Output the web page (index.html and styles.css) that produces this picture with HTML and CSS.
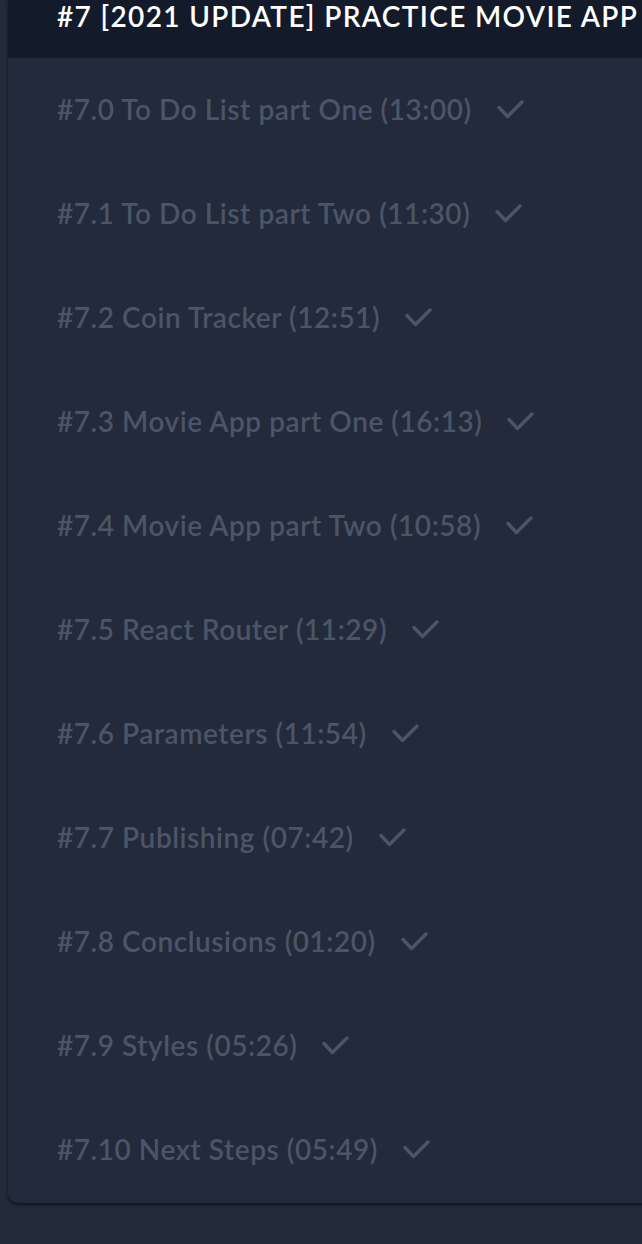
FILE: index.html
```html
<!DOCTYPE html>
<html>
<head>
<meta charset="utf-8">
<link rel="stylesheet" href="styles.css">
</head>
<body>
<section class="card">
  <h2 class="card-title">#7 [2021 UPDATE] PRACTICE MOVIE APP</h2>
  <ul class="lessons">
    <li class="lesson"><span>#7.0 To Do List part One (13:00)</span><svg class="check" viewBox="0 0 28 22"><path d="M3 8.5 L11.5 17.5 L26 3"/></svg></li>
    <li class="lesson"><span>#7.1 To Do List part Two (11:30)</span><svg class="check" viewBox="0 0 28 22"><path d="M3 8.5 L11.5 17.5 L26 3"/></svg></li>
    <li class="lesson"><span>#7.2 Coin Tracker (12:51)</span><svg class="check" viewBox="0 0 28 22"><path d="M3 8.5 L11.5 17.5 L26 3"/></svg></li>
    <li class="lesson"><span>#7.3 Movie App part One (16:13)</span><svg class="check" viewBox="0 0 28 22"><path d="M3 8.5 L11.5 17.5 L26 3"/></svg></li>
    <li class="lesson"><span>#7.4 Movie App part Two (10:58)</span><svg class="check" viewBox="0 0 28 22"><path d="M3 8.5 L11.5 17.5 L26 3"/></svg></li>
    <li class="lesson"><span>#7.5 React Router (11:29)</span><svg class="check" viewBox="0 0 28 22"><path d="M3 8.5 L11.5 17.5 L26 3"/></svg></li>
    <li class="lesson"><span>#7.6 Parameters (11:54)</span><svg class="check" viewBox="0 0 28 22"><path d="M3 8.5 L11.5 17.5 L26 3"/></svg></li>
    <li class="lesson"><span>#7.7 Publishing (07:42)</span><svg class="check" viewBox="0 0 28 22"><path d="M3 8.5 L11.5 17.5 L26 3"/></svg></li>
    <li class="lesson"><span>#7.8 Conclusions (01:20)</span><svg class="check" viewBox="0 0 28 22"><path d="M3 8.5 L11.5 17.5 L26 3"/></svg></li>
    <li class="lesson"><span>#7.9 Styles (05:26)</span><svg class="check" viewBox="0 0 28 22"><path d="M3 8.5 L11.5 17.5 L26 3"/></svg></li>
    <li class="lesson"><span>#7.10 Next Steps (05:49)</span><svg class="check" viewBox="0 0 28 22"><path d="M3 8.5 L11.5 17.5 L26 3"/></svg></li>
  </ul>
</section>
</body>
</html>
```

FILE: styles.css
```css
html, body {
  margin: 0;
  padding: 0;
  background: #232a3a;
  overflow: hidden;
}
body {
  font-family: Lato, "Open Sans", sans-serif;
  width: 642px;
  height: 1244px;
}
.card {
  margin-left: 8px;
  width: 660px;
  height: 1203px;
  background: #222a3b;
  border-radius: 0 0 0 10px;
  box-shadow: 0 2px 3px rgba(10, 14, 24, 0.8);
  overflow: hidden;
}
.card-title {
  margin: 0;
  height: 58px;
  box-sizing: border-box;
  padding: 0 0 0 49px;
  background: #131a2a;
  color: #ffffff;
  font-size: 28px;
  font-weight: 600;
  line-height: 32px;
  letter-spacing: 1.35px;
  white-space: nowrap;
}
.lessons {
  list-style: none;
  margin: 0;
  padding: 0 0 0 49px;
}
.lesson {
  display: flex;
  align-items: center;
  height: 104px;
  color: #4c5567;
  font-size: 28px;
  font-weight: 600;
  letter-spacing: 0.55px;
  white-space: nowrap;
}
.lesson:first-child {
  margin-top: -1px;
}
.check {
  width: 28px;
  height: 22px;
  margin-left: 24px;
  margin-top: 2px;
  fill: none;
  stroke: #4c5567;
  stroke-width: 3.4;
  stroke-linecap: round;
  stroke-linejoin: round;
}
```
